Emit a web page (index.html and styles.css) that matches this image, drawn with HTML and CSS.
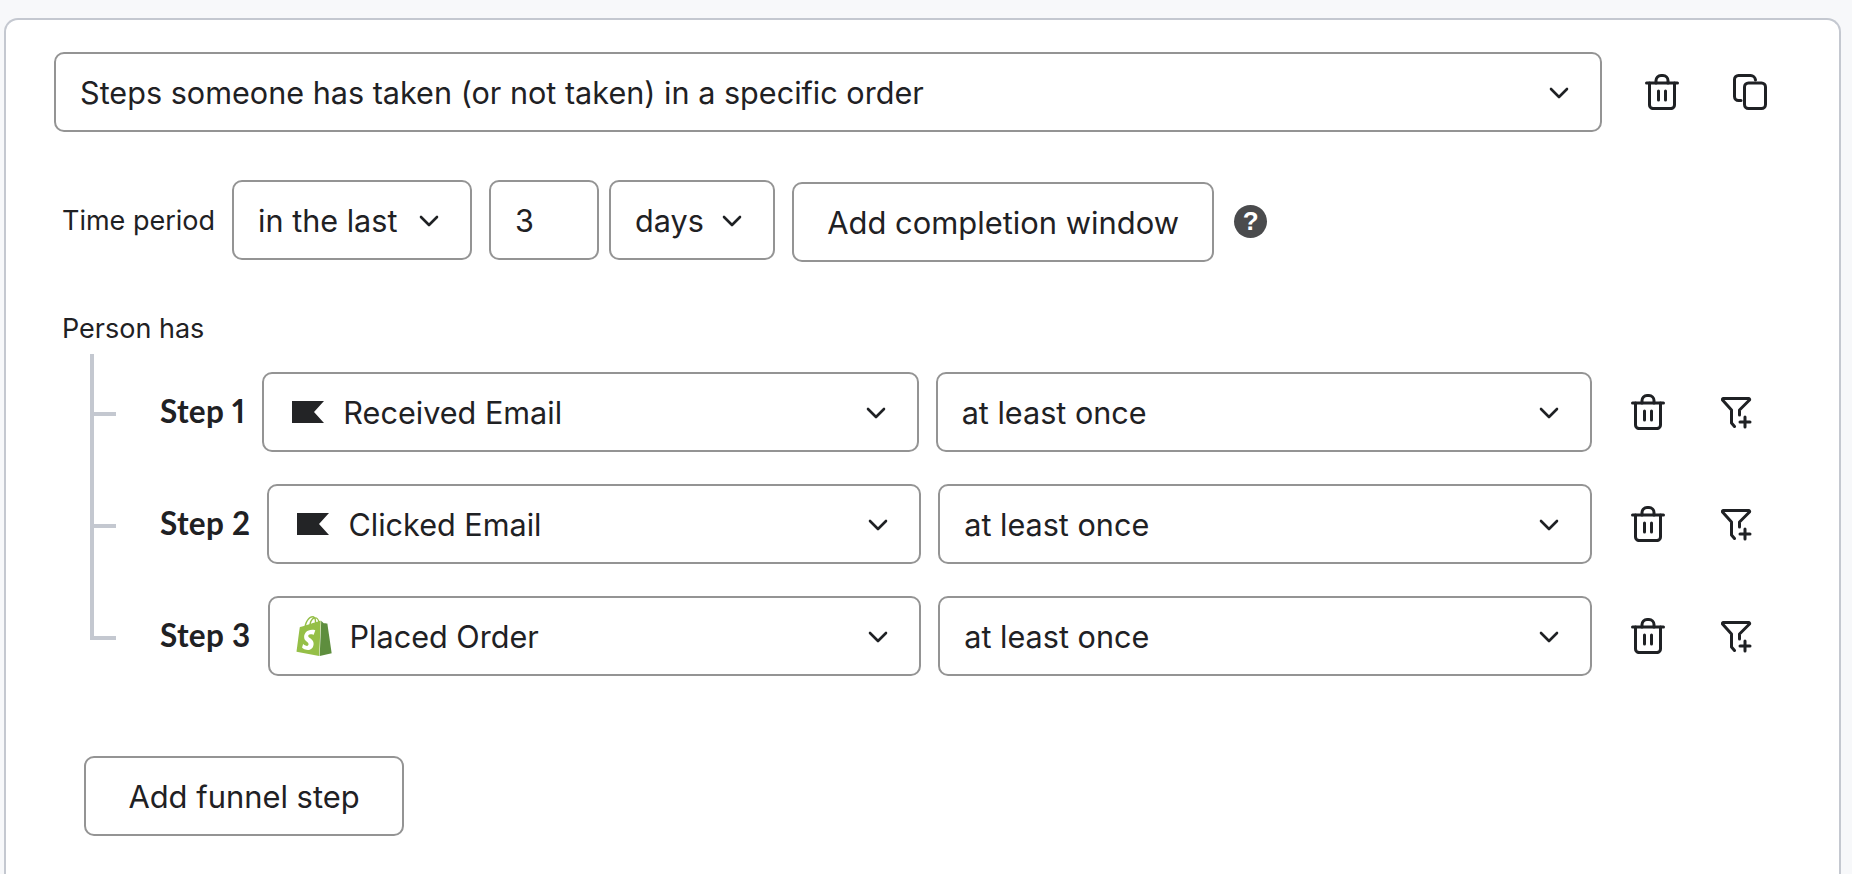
FILE: index.html
```html
<!DOCTYPE html>
<html lang="en">
<head>
<meta charset="utf-8">
<title>Segment definition</title>
<link rel="stylesheet" href="styles.css">
</head>
<body>
<svg class="defs" width="0" height="0" aria-hidden="true">
  <defs>
    <symbol id="chev" viewBox="0 0 20 12"><path d="M2 2l8 8 8-8" fill="none" stroke="currentColor" stroke-width="2.6" stroke-linecap="round" stroke-linejoin="round"/></symbol>
    <symbol id="trash" viewBox="0 0 34 36"><g fill="none" stroke="currentColor" stroke-width="3" stroke-linecap="round" stroke-linejoin="round"><path d="M1.5 9h31"/><path d="M4.5 9v22a3.6 3.6 0 0 0 3.6 3.6h17.8a3.600 3.600 0 0 0 3.600-3.600V9"/><path d="M11 9V6.500a5 5 0 0 1 5-5h2a5 5 0 0 1 5 5V9"/><path d="M13.500 17v9M20.500 17v9"/></g></symbol>
    <symbol id="copy" viewBox="0 0 34 36"><g fill="none" stroke="currentColor" stroke-width="3" stroke-linecap="round" stroke-linejoin="round"><rect x="11.500" y="9" width="21" height="25.500" rx="4"/><path d="M8 26.500h-2.500a4 4 0 0 1-4-4V5.500a4 4 0 0 1 4-4h12a5 5 0 0 1 5 4.500"/></g></symbol>
    <symbol id="filter" viewBox="0 0 32 32"><g fill="none" stroke="currentColor" stroke-width="3" stroke-linecap="round" stroke-linejoin="round"><path d="M18.500 18v-5L28.500 3a1 1 0 0 0-.700-1.500H2.200A1 1 0 0 0 1.500 3L10.500 13v13l3 3.500"/><path d="M24 20v10M19 25h10"/></g></symbol>
    <symbol id="flag" viewBox="0 0 32 22"><path d="M0 0h32L22 11l10 11H0z" fill="currentColor"/></symbol>
    <symbol id="shopify" viewBox="1.250 0 21.300 24">
      <path fill="#95bf47" d="M11.17.83c.136 0 .271.038.405.135-.984.465-2.064 1.639-2.508 3.992-.656.213-1.293.405-1.889.578C7.697 3.75 8.951.84 11.17.84V.83zm1.235 2.949v.135c-.754.232-1.583.484-2.394.736.466-1.777 1.333-2.645 2.085-2.971.193.501.309 1.176.309 2.100zm.539-2.234c.694.074 1.141.867 1.429 1.755-.349.114-.735.231-1.158.366v-.252c0-.752-.096-1.371-.271-1.871v.002zm2.992 1.289c-.020 0-.060.021-.078.021s-.289.075-.714.210c-.423-1.233-1.176-2.370-2.508-2.370h-.115C12.135.209 11.669 0 11.265 0 8.159 0 6.675 3.877 6.210 5.846c-1.194.365-2.063.636-2.160.674-.675.213-.694.232-.772.870-.075.462-1.830 14.063-1.830 14.063L15.009 24l.927-21.166z"/>
      <path fill="#5e8e3e" d="M15.337 23.979l7.216-1.561s-2.604-17.613-2.625-17.730c-.018-.116-.114-.192-.211-.192s-1.929-.136-1.929-.136-1.275-1.274-1.439-1.411c-.045-.037-.075-.057-.121-.074l-.914 21.104h.023z"/>
      <path fill="#fff" d="M11.710 11.305s-.810-.424-1.774-.424c-1.447 0-1.504.906-1.504 1.141 0 1.232 3.240 1.715 3.240 4.629 0 2.295-1.440 3.760-3.406 3.760-2.354 0-3.540-1.465-3.540-1.465l.646-2.086s1.245 1.066 2.280 1.066c.675 0 .975-.545.975-.932 0-1.619-2.654-1.694-2.654-4.359-.034-2.237 1.571-4.416 4.827-4.416 1.257 0 1.875.361 1.875.361l-.945 2.715-.020.010z"/>
    </symbol>
  </defs>
</svg>
<main class="card">
  <div class="top-row">
    <div class="field grow"><span class="field-label">Steps someone has taken (or not taken) in a specific order</span><svg class="chev"><use href="#chev"/></svg></div>
    <div class="actions top-actions">
      <svg class="icon"><use href="#trash"/></svg>
      <svg class="icon"><use href="#copy"/></svg>
    </div>
  </div>
  <div class="time-row">
    <span class="small-label time-label">Time period</span>
    <div class="field period"><span class="field-label">in the last</span><svg class="chev"><use href="#chev"/></svg></div>
    <div class="field amount"><span class="field-label">3</span></div>
    <div class="field unit"><span class="field-label">days</span><svg class="chev"><use href="#chev"/></svg></div>
    <button class="btn completion">Add completion window</button>
    <span class="help">?</span>
  </div>
  <div class="small-label person">Person has</div>
  <div class="steps">
    <div class="step">
      <span class="tick"></span><span class="step-name">Step 1</span>
      <div class="field grow tight"><svg class="flag"><use href="#flag"/></svg><span class="field-label">Received Email</span><svg class="chev push"><use href="#chev"/></svg></div>
      <div class="field grow"><span class="field-label">at least once</span><svg class="chev"><use href="#chev"/></svg></div>
      <div class="actions step-actions"><svg class="icon"><use href="#trash"/></svg><svg class="icon funnel"><use href="#filter"/></svg></div>
    </div>
    <div class="step">
      <span class="tick"></span><span class="step-name">Step 2</span>
      <div class="field grow tight"><svg class="flag"><use href="#flag"/></svg><span class="field-label">Clicked Email</span><svg class="chev push"><use href="#chev"/></svg></div>
      <div class="field grow"><span class="field-label">at least once</span><svg class="chev"><use href="#chev"/></svg></div>
      <div class="actions step-actions"><svg class="icon"><use href="#trash"/></svg><svg class="icon funnel"><use href="#filter"/></svg></div>
    </div>
    <div class="step">
      <span class="tick"></span><span class="step-name">Step 3</span>
      <div class="field grow tight shop"><svg class="bag"><use href="#shopify"/></svg><span class="field-label">Placed Order</span><svg class="chev push"><use href="#chev"/></svg></div>
      <div class="field grow"><span class="field-label">at least once</span><svg class="chev"><use href="#chev"/></svg></div>
      <div class="actions step-actions"><svg class="icon"><use href="#trash"/></svg><svg class="icon funnel"><use href="#filter"/></svg></div>
    </div>
  </div>
  <button class="btn add-step">Add funnel step</button>
</main>
</body>
</html>
```
FILE: styles.css
```css
* { box-sizing: border-box; }
html, body { height: 100%; }
body {
  margin: 0;
  overflow: hidden;
  background: #f7f8fa;
  color: #1f2124;
  font-family: Inter, "Liberation Sans", sans-serif;
  padding: 18px 11px 0 4px;
}
.defs { position: absolute; }
.card {
  height: 856px;
  background: #fff;
  border: 2px solid #c4c8d0;
  border-bottom: 0;
  border-radius: 14px 14px 0 0;
  padding: 32px 0 0 48px;
}
.top-row { display: flex; align-items: center; }
.top-row .grow { flex: 0 0 1548px; }
.field {
  display: flex;
  align-items: center;
  justify-content: space-between;
  height: 80px;
  padding: 0 31px 0 24px;
  background: #fff;
  border: 2px solid #949494;
  border-radius: 10px;
  font-size: 30.6px;
  white-space: nowrap;
}
.grow { flex: 1 1 0; min-width: 0; }
.chev { flex: none; width: 20px; height: 12px; margin-top: 2px; color: #1f2124; }
.actions { display: flex; align-items: center; flex: none; }
.icon { width: 34px; height: 36px; color: #1f2124; flex: none; }
.top-actions { gap: 54px; margin-left: 43px; }
.time-row { display: flex; align-items: flex-start; margin-top: 48px; padding-left: 8px; }
.small-label { font-size: 27px; line-height: 30px; }
.time-label { margin: 26px 17px 0 0; }
.period { flex: 0 0 240px; }
.amount { flex: 0 0 110px; margin-left: 17px; }
.unit { flex: 0 0 166px; margin-left: 10px; }
.btn {
  height: 80px;
  background: #fff;
  border: 2px solid #949494;
  border-radius: 10px;
  color: #1f2124;
  font: 440 30.9px Inter, "Liberation Sans", sans-serif;
}
.completion { width: 422px; margin: 2px 0 0 17px; }
.help {
  display: flex;
  align-items: center;
  justify-content: center;
  width: 33px;
  height: 33px;
  margin: 25px 0 0 20px;
  border-radius: 50%;
  background: #4a4b4d;
  color: #fff;
  font: 700 26px "Liberation Sans", sans-serif;
}
.person { margin: 52px 0 0 8px; }
.steps { position: relative; margin: 10px 0 0 36px; padding-top: 18px; display: flex; flex-direction: column; gap: 32px; }
.steps::before { content: ""; position: absolute; left: 0; top: 0; bottom: 36px; width: 4px; background: #c4c8d0; border-radius: 0 0 0 3px; }
.step { display: flex; align-items: center; }
.tick { flex: none; width: 26px; height: 4px; background: #c4c8d0; margin: 3px 44px 0 0; }
.step-name { flex: none; margin: -2px 17px 0 0; font: 700 31.5px Lato, "Liberation Sans", sans-serif; font-variant-numeric: proportional-nums; letter-spacing: .3px; }
.step .field + .field { margin-left: 17px; }
.flag { flex: none; width: 32px; height: 22px; margin: 0 19px 0 4px; color: #232426; }
.bag { flex: none; width: 36px; height: 40px; margin: 0 18px 0 2px; }
.push { margin-left: auto; }
.step-actions { gap: 56px; margin-left: 39px; margin-right: 86px; }
.funnel { width: 32px; height: 32px; margin-top: 2px; }
.add-step { display: block; width: 320px; margin: 80px 0 0 30px; }
```
